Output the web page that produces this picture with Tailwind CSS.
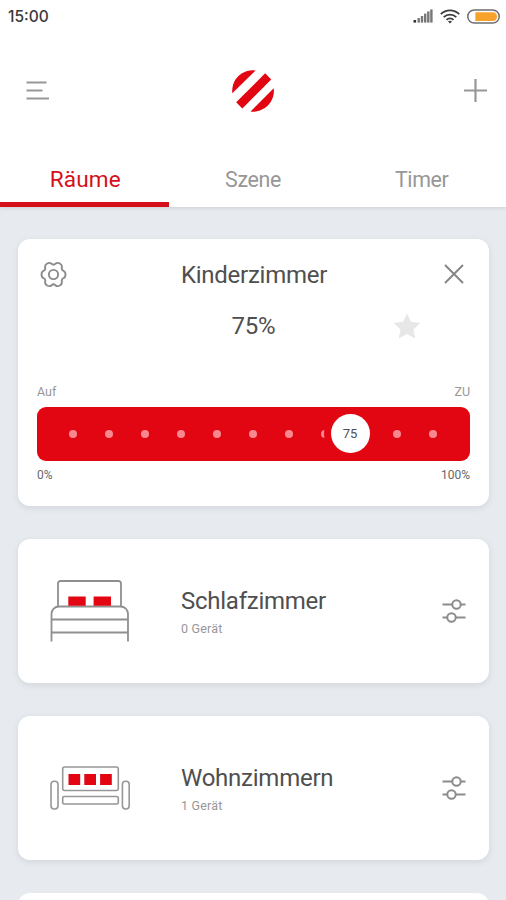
<!DOCTYPE html>
<html lang="de">
<head>
    <meta charset="UTF-8">
    <meta name="viewport" content="width=device-width, initial-scale=1.0">
    <title>Räume</title>
    <script src="https://cdn.jsdelivr.net/npm/@tailwindcss/browser@4"></script>
</head>
<body class="h-[900px] overflow-hidden bg-[#e7eaef] font-[Roboto,sans-serif] text-[#4f4f4f]">
    <!-- Header -->
    <header class="relative bg-white h-[207px] flex flex-col shadow-[0_1px_4px_rgba(0,0,0,0.12)]">
        <!-- Status bar -->
        <div class="h-8 pl-2 pr-[6px] flex items-center justify-between">
            <span class="pt-[2px] font-[Inter,sans-serif] font-medium text-[15.5px] leading-none text-[#3a3a3a]">15:00</span>
            <div class="flex items-center gap-[7px]">
                <svg class="w-[20px] h-[14px]" viewBox="0 0 20 14" fill="#777">
                    <rect x="0.5" y="11" width="2.6" height="2.6" fill="#333"/>
                    <rect x="4.5" y="9" width="2.4" height="4.6"/>
                    <rect x="7.8" y="7" width="2.4" height="6.6"/>
                    <rect x="11" y="4.6" width="2.4" height="9"/>
                    <rect x="14.1" y="2.4" width="2.4" height="11.2"/>
                    <rect x="17.2" y="0.4" width="2.4" height="13.2"/>
                </svg>
                <svg class="w-[20px] h-[15px]" viewBox="0 0 20 15" fill="none" stroke="#3d3d3d" stroke-width="1.8">
                    <path d="M0.8 5.2a13 13 0 0 1 18.4 0"/>
                    <path d="M3.7 8.1a9 9 0 0 1 12.6 0"/>
                    <path d="M6.5 10.9a5 5 0 0 1 7 0"/>
                    <path d="M10 14.6l-2-2a2.9 2.9 0 0 1 4 0z" fill="#3d3d3d" stroke="none"/>
                </svg>
                <svg class="w-[33px] h-[15px]" viewBox="0 0 33 15">
                    <rect x="0.8" y="0.9" width="31.4" height="13.2" rx="6.6" fill="#fff" stroke="#6e6e6e" stroke-width="1.5"/>
                    <path d="M8.3 3.3h17.5a4.2 4.2 0 0 1 0 8.6H8.3z" fill="#f7a22b"/>
                </svg>
            </div>
        </div>

        <!-- App bar -->
        <div class="h-[117px] pl-[26px] pr-[18px] grid grid-cols-[1fr_auto_1fr] items-center">
            <svg class="w-[24px] h-[20px]" viewBox="0 0 24 20" stroke="#979797" stroke-width="2">
                <path d="M0.5 1.5h20M0.5 9.5h16M0.5 17.5h22.5"/>
            </svg>
            <svg class="w-[42px] h-[42px] -ml-2" viewBox="0 0 42 42" fill="#e20613">
                <path d="M0.3 23.2A20.6 20.6 0 0 1 23.6 0.4z"/>
                <path d="M33.2 3.2L39.2 9.4L10.3 38.4L4.2 32.2z"/>
                <path d="M41.7 18.2A20.6 20.6 0 0 1 18.6 41.5z"/>
            </svg>
            <svg class="w-[25px] h-[25px] justify-self-end" viewBox="0 0 25 25" stroke="#979797" stroke-width="2.2">
                <path d="M1 12.5h23M12.5 1v23"/>
            </svg>
        </div>

        <!-- Tabs -->
        <nav class="flex-1 grid grid-cols-3 text-center text-[21.4px] tracking-[-0.35px]">
            <a class="pt-[14px] pl-[2px] leading-[34px] text-[22.6px] tracking-[0.1px] text-[#d5101a] border-b-[5px] border-[#d5101a]">Räume</a>
            <a class="pt-[14px] leading-[34px] text-[#979797]">Szene</a>
            <a class="pt-[14px] leading-[34px] text-[#979797]">Timer</a>
        </nav>
    </header>

    <main class="pt-8 pl-[18px] pr-[17px] flex flex-col gap-[33px]">
        <!-- Open room with slider -->
        <section class="h-[267px] shrink-0 bg-white rounded-xl px-[19px] shadow-[0_2px_7px_rgba(0,0,0,0.09)]">
            <div class="h-[70px] px-[3px] flex items-center justify-between">
                <svg class="w-[27px] h-[27px]" viewBox="-0.5 -0.5 27 27" fill="none" stroke="#8c8c8c" stroke-width="1.9">
                    <path d="M25 13Q25 15.92 23 16.71Q20.79 17.5 21.33 20Q21.87 22.51 19.33 23.97Q16.8 25.43 14.9 23.71Q13 22 11.1 23.71Q9.2 25.43 6.67 23.97Q4.13 22.51 4.67 20Q5.21 17.5 3 16.71Q1 15.92 1 13Q1 10.08 3 9.29Q5.21 8.5 4.67 6Q4.13 3.49 6.67 2.03Q9.2 0.57 11.1 2.29Q13 4 14.9 2.29Q16.8 0.57 19.33 2.03Q21.87 3.49 21.33 6Q20.79 8.5 23 9.29Q25 10.08 25 13Z"/>
                    <circle cx="13" cy="13" r="4.6"/>
                </svg>
                <h2 class="pt-[1px] -ml-[3px] text-[24px] tracking-[-0.25px] leading-none">Kinderzimmer</h2>
                <svg class="w-[20px] h-[20px] mr-[3px]" viewBox="0 0 20 20" stroke="#858585" stroke-width="1.9">
                    <path d="M1 1l18 18M19 1L1 19"/>
                </svg>
            </div>
            <div class="h-[34px] grid grid-cols-3 items-center">
                <span class="col-start-2 text-center text-[24px] tracking-[-0.25px] leading-none">75%</span>
                <svg class="w-[28px] h-[26px] ml-[67px]" viewBox="0 0 28 26" fill="#e7e7e7">
                    <path d="M14 0.5L18 8.8L27.2 10L20.5 16.4L22.2 25.4L14 21.1L5.8 25.4L7.5 16.4L0.8 10L10 8.8Z"/>
                </svg>
            </div>
            <div class="mt-[39px] h-[25px] pb-1 flex items-center justify-between text-[12.5px] leading-none text-[#979797]">
                <span>Auf</span>
                <span>ZU</span>
            </div>
            <div class="relative h-[54px] rounded-[9px] bg-[#e20613] pl-[31.5px] pr-[32.5px] flex items-center justify-between">
                <span class="w-2 h-2 rounded-full bg-[#f8888e]"></span>
                <span class="w-2 h-2 rounded-full bg-[#f8888e]"></span>
                <span class="w-2 h-2 rounded-full bg-[#f8888e]"></span>
                <span class="w-2 h-2 rounded-full bg-[#f8888e]"></span>
                <span class="w-2 h-2 rounded-full bg-[#f8888e]"></span>
                <span class="w-2 h-2 rounded-full bg-[#f8888e]"></span>
                <span class="w-2 h-2 rounded-full bg-[#f8888e]"></span>
                <span class="w-2 h-2 rounded-full bg-[#f8888e]"></span>
                <span class="w-2 h-2 rounded-full bg-[#f8888e]"></span>
                <span class="w-2 h-2 rounded-full bg-[#f8888e]"></span>
                <span class="w-2 h-2 rounded-full bg-[#f8888e]"></span>
                <!-- Thumb -->
                <div class="absolute left-[293.5px] top-[7px] w-[39px] h-[39px] rounded-full bg-white ring-7 ring-[#e20613] flex items-center justify-center text-[13px] leading-none">75</div>
            </div>
            <div class="h-[28px] flex items-center justify-between text-[12px] leading-none text-[#666]">
                <span>0%</span>
                <span>100%</span>
            </div>
        </section>

        <!-- Bedroom -->
        <section class="h-[144px] shrink-0 bg-white rounded-xl pl-8 pr-[23px] flex items-center shadow-[0_2px_7px_rgba(0,0,0,0.09)]">
            <svg class="w-[80px] h-[62px]" viewBox="0 0 80 62" fill="none" stroke="#8f8f8f" stroke-width="1.8">
                <path d="M8 26V3.4a2.4 2.4 0 0 1 2.4-2.4h58.2a2.4 2.4 0 0 1 2.4 2.4V26"/>
                <path d="M1.5 61.5V34a7.5 7.5 0 0 1 7.5-7.5h61.5a7.5 7.5 0 0 1 7.5 7.5v27.5M1.5 39.5H78M1.5 52.5H78"/>
                <path d="M18.3 16.5h17.4v9.2H18.3zM43.6 16.5H61v9.2H43.6z" fill="#e20613" stroke="none"/>
            </svg>
            <div class="ml-[51px] flex-1 pt-[2px]">
                <h2 class="text-[24px] tracking-[-0.25px] leading-7">Schlafzimmer</h2>
                <p class="mt-[6px] text-[12.5px] tracking-[0.2px] leading-4 text-[#979797]">0 Gerät</p>
            </div>
            <svg class="w-[24px] h-[24px]" viewBox="0 0 24 24" fill="none" stroke="#8c8c8c" stroke-width="2">
                <path d="M0.5 5.5H10M19 5.5h4.5M0.5 18.5H5M14 18.5h9.5"/>
                <circle cx="14.5" cy="5.5" r="4.2"/>
                <circle cx="9.5" cy="18.5" r="4.2"/>
            </svg>
        </section>

        <!-- Living room -->
        <section class="h-[144px] shrink-0 bg-white rounded-xl pl-8 pr-[23px] flex items-center shadow-[0_2px_7px_rgba(0,0,0,0.09)]">
            <svg class="w-[80px] h-[44px]" viewBox="0 0 80 44" fill="none" stroke="#979797" stroke-width="1.6">
                <rect x="12.7" y="1" width="55.6" height="23.5" rx="2"/>
                <rect x="12.7" y="30.5" width="55.6" height="7.5" rx="1.5"/>
                <rect x="1" y="15.3" width="7" height="27.7" rx="3.2"/>
                <rect x="72.4" y="15.3" width="6.8" height="27.7" rx="3.2"/>
                <path d="M18.5 8h11.7v11H18.5zM34.3 8H46v11H34.3zM50.1 8h11.7v11H50.1z" fill="#e20613" stroke="none"/>
            </svg>
            <div class="ml-[51px] flex-1 pt-[2px]">
                <h2 class="text-[24px] tracking-[-0.25px] leading-7">Wohnzimmern</h2>
                <p class="mt-[6px] text-[12.5px] tracking-[0.2px] leading-4 text-[#979797]">1 Gerät</p>
            </div>
            <svg class="w-[24px] h-[24px]" viewBox="0 0 24 24" fill="none" stroke="#8c8c8c" stroke-width="2">
                <path d="M0.5 5.5H10M19 5.5h4.5M0.5 18.5H5M14 18.5h9.5"/>
                <circle cx="14.5" cy="5.5" r="4.2"/>
                <circle cx="9.5" cy="18.5" r="4.2"/>
            </svg>
        </section>

        <!-- Next card, only its top edge is on screen -->
        <div class="h-[7px] overflow-hidden">
            <section class="h-3 bg-white rounded-t-xl"></section>
        </div>
    </main>
</body>
</html>
